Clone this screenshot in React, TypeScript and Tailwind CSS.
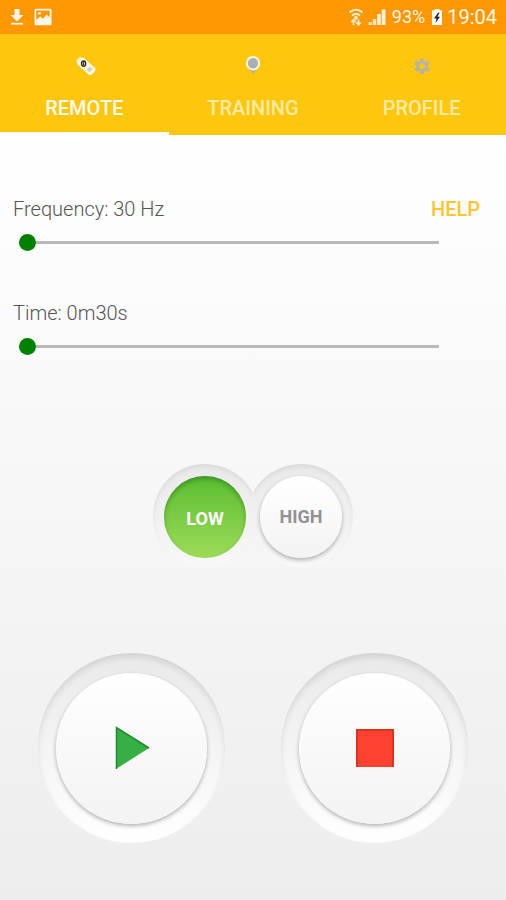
import { useState } from 'react';

interface SliderRowProps {
  id: string;
  label: string;
  max: number;
  step: number;
  value: number;
  onChange: (value: number) => void;
}

function StatusBar() {
  return (
    <div className="flex h-[34px] items-center justify-between bg-[#ff9800] pr-[9px] pl-2 text-[#fff6e8]">
      <div className="flex items-center gap-2">
        <svg viewBox="0 0 18 20" className="h-5 w-[18px]" fill="#fff6e8">
          <path d="M6.5 2h5v6h4L9 14.5 2.5 8h4z" />
          <path d="M3 15.8h12v1.8H3z" />
        </svg>
        <svg viewBox="0 0 18 18" className="h-[18px] w-[18px]">
          <path
            fill="#fff6e8"
            fillRule="evenodd"
            d="M2 .8h14A1.5 1.5 0 0 1 17.500 2.300v13.400a1.500 1.500 0 0 1-1.500 1.500H2A1.500 1.500 0 0 1 .5 15.700V2.300A1.500 1.500 0 0 1 2 .8zM2.300 2.600v9.200l4-3.300 2.700 2.300 3.700-4.300 3 3V2.600z"
          />
          <circle cx="5.500" cy="5.300" r="1.400" fill="#fff6e8" />
        </svg>
      </div>
      <div className="flex items-center text-xl leading-6">
        <svg viewBox="0 0 16 18" className="h-[18px] w-4" fill="none" stroke="#fff1dc">
          <path d="M1.500 4.500Q8-1.200 14.500 4.500" strokeWidth="1.700" />
          <path d="M4 7.500Q8 4 12 7.500" strokeWidth="1.700" />
          <circle cx="8" cy="9.800" r="1.900" fill="#fff1dc" stroke="none" />
          <path
            d="M5.500 17v-5M3.300 14l2.200-2.300L7.700 14M10.500 11.500v5M8.300 14.500l2.200 2.300 2.200-2.300"
            strokeWidth="1.700"
          />
        </svg>
        <svg viewBox="0 0 18 18" className="ml-1 h-[18px] w-[18px]" fill="#ffe0b8">
          <path d="M.5 14H4v3H.5zM4.800 11h3.500v6H4.800z" />
          <path d="M9.200 6h3.600v11H9.200zM13.700 1.500h3.800V17h-3.800z" fill="#fff1dc" />
        </svg>
        <span className="ml-1.5 text-lg leading-6">93%</span>
        <svg viewBox="0 0 12 18" className="ml-1.5 h-[18px] w-3">
          <path d="M3.500 1h5v1.500H11V17H1V2.500h2.500z" fill="#fff" />
          <path d="M7.200 4.500 3 10.500h2.500L4.500 15 9 8.800H6.500L8.500 4.500z" fill="#222" />
        </svg>
        <span className="ml-1">19:04</span>
      </div>
    </div>
  );
}

function RemoteIcon() {
  return (
    <svg viewBox="0 0 20 20" className="ml-1 h-5 w-5">
      <g transform="rotate(42 10 10)">
        <rect x="-1" y="7" width="4" height="6" rx="1" fill="#fff0b8" />
        <rect x="1" y="5.400" width="19" height="9.200" rx="2.500" fill="#fff8e2" />
        <rect x="13" y="7.500" width="4" height="5" rx="1" fill="#d5d3cb" />
      </g>
      <ellipse cx="7.600" cy="7.600" rx="2" ry="2.700" fill="#fff" stroke="#2b2a22" strokeWidth="1.500" />
      <path d="M7.600 6.200v2.800" stroke="#2b2a22" />
    </svg>
  );
}

function PinIcon() {
  return (
    <svg viewBox="0 0 20 20" className="h-5 w-5">
      <path d="M4.500 11h11L10 18.500z" fill="#b9b39b" />
      <circle cx="10" cy="7.200" r="6.200" fill="#a9b0bd" stroke="#fdf6da" strokeWidth="2" />
    </svg>
  );
}

function GearIcon() {
  return (
    <svg viewBox="0 0 20 20" className="h-5 w-5">
      <g fill="#b8b4a4">
        <path
          fillRule="evenodd"
          d="M10 4.500a5.700 5.700 0 1 1 0 11.400 5.700 5.700 0 0 1 0-11.400zm0 2.900a2.800 2.800 0 1 0 0 5.600 2.800 2.800 0 0 0 0-5.600z"
        />
        {[0, 60, 120, 180, 240, 300].map((angle) => (
          <path key={angle} d="M8.200 2.300h3.600l.6 3.500H7.600z" transform={`rotate(${angle} 10 10.200)`} />
        ))}
      </g>
    </svg>
  );
}

const tabs = [
  { name: 'REMOTE', icon: <RemoteIcon /> },
  { name: 'TRAINING', icon: <PinIcon /> },
  { name: 'PROFILE', icon: <GearIcon /> },
];

function SliderRow({ id, label, max, step, value, onChange }: SliderRowProps) {
  return (
    <div>
      <label htmlFor={id} className="block text-xl leading-6 font-light text-[#555]">
        {label}
      </label>
      <div className="mt-3 mr-10 ml-1.5 flex h-[18px] items-center">
        <input
          id={id}
          type="range"
          min={30}
          max={max}
          step={step}
          value={value}
          onChange={(e) => onChange(Number(e.target.value))}
          className="h-[3px] w-full cursor-pointer appearance-none bg-[#b9b9b9] [&::-webkit-slider-thumb]:h-[17px] [&::-webkit-slider-thumb]:w-[17px] [&::-webkit-slider-thumb]:appearance-none [&::-webkit-slider-thumb]:rounded-full [&::-webkit-slider-thumb]:bg-[#008000]"
        />
      </div>
    </div>
  );
}

const raised =
  'rounded-full bg-linear-to-b from-white to-[#f3f3f3] shadow-[0_2px_4px_rgba(0,0,0,0.3)]';
const pressed =
  'rounded-full bg-linear-to-b from-[#58bd30] to-[#9cdb58] pt-1 shadow-[inset_0_3px_4px_rgba(20,90,10,0.4)]';

function LevelSwitch() {
  const [level, setLevel] = useState('LOW');

  return (
    <div className="relative mx-auto flex w-[202px] justify-center gap-[14px] py-[13px]">
      {/* joined groove behind both buttons */}
      <svg viewBox="0 0 202 108" className="absolute inset-0 h-full w-full">
        <defs>
          <linearGradient id="groove" x1="0" y1="0" x2="0" y2="1">
            <stop offset="0" stopColor="#e9e9e9" />
            <stop offset="1" stopColor="#f8f8f8" />
          </linearGradient>
          <filter id="groove-shade">
            <feOffset dy="3" />
            <feGaussianBlur stdDeviation="2" result="blur" />
            <feComposite in="SourceAlpha" in2="blur" operator="out" result="edge" />
            <feFlood floodColor="#000" floodOpacity="0.14" />
            <feComposite in2="edge" operator="in" result="shade" />
            <feMerge>
              <feMergeNode in="SourceGraphic" />
              <feMergeNode in="shade" />
            </feMerge>
          </filter>
        </defs>
        <path
          d="M52 1C73 1 92 12 101 30 110 12 129 1 150 1a51 52 0 0 1 0 104C129 105 110 94 101 76 92 94 73 105 52 105A51 52 0 0 1 52 1z"
          fill="url(#groove)"
          filter="url(#groove-shade)"
        />
      </svg>
      {['LOW', 'HIGH'].map((name) => (
        <button
          key={name}
          onClick={() => setLevel(name)}
          className={`relative h-[82px] w-[82px] text-lg font-bold ${
            level === name ? `${pressed} text-white` : `${raised} text-[#929292]`
          }`}
        >
          {name}
        </button>
      ))}
    </div>
  );
}

function RoundButton({ label, children }: { label: string; children: React.ReactNode }) {
  return (
    <div className="flex h-[190px] w-[187px] items-center justify-center rounded-full bg-linear-to-b from-[#e9e9e9] to-white shadow-[inset_0_4px_6px_rgba(0,0,0,0.1)]">
      <button aria-label={label} className={`flex h-[151px] w-[151px] items-center justify-center ${raised}`}>
        {children}
      </button>
    </div>
  );
}

export default function App() {
  const [activeTab, setActiveTab] = useState('REMOTE');
  const [frequency, setFrequency] = useState(30);
  const [time, setTime] = useState(30);

  return (
    <div className="flex min-h-screen flex-col font-[Roboto,sans-serif]">
      <StatusBar />

      <nav className="grid grid-cols-3 bg-[#fec60c]">
        {tabs.map((tab) => (
          <button
            key={tab.name}
            onClick={() => setActiveTab(tab.name)}
            className={`flex h-[101px] flex-col items-center border-b-3 pt-[22px] text-xl leading-6 font-medium ${
              activeTab === tab.name ? 'border-white text-[#fffaf0]' : 'border-transparent text-[#ffeaa5]'
            }`}
          >
            {tab.icon}
            <span className="mt-5">{tab.name}</span>
          </button>
        ))}
      </nav>

      <main className="flex-1 bg-linear-to-b from-white to-[#ededed] pt-[62px] pb-14">
        <div className="flex items-start pr-[26px] pl-[13px]">
          <div className="flex flex-1 flex-col gap-[50px]">
            <SliderRow
              id="frequency"
              label={`Frequency: ${frequency} Hz`}
              max={120}
              step={5}
              value={frequency}
              onChange={setFrequency}
            />
            <SliderRow
              id="time"
              label={`Time: ${Math.floor(time / 60)}m${time % 60}s`}
              max={600}
              step={30}
              value={time}
              onChange={setTime}
            />
          </div>
          <button className="-ml-12 text-xl leading-6 font-medium text-[#fbc62f]">HELP</button>
        </div>

        <div className="mt-[108px]">
          <LevelSwitch />
        </div>

        <div className="mt-[82px] flex justify-center gap-14">
          <RoundButton label="Play">
            <svg viewBox="0 0 36 44" className="h-11 w-9">
              <path d="M2 1v42l33-21z" fill="#35b044" />
              <path d="M2.500 43V1.500L35 22" fill="none" stroke="#1f8a30" strokeWidth="1.500" />
            </svg>
          </RoundButton>
          <RoundButton label="Stop">
            <svg viewBox="0 0 38 38" className="h-[38px] w-[38px]">
              <path d="M0 0h38v38H0z" fill="#ff4131" />
              <path d="M1 38V1h36v37" fill="none" stroke="#d42d18" strokeWidth="1.500" />
            </svg>
          </RoundButton>
        </div>
      </main>
    </div>
  );
}
